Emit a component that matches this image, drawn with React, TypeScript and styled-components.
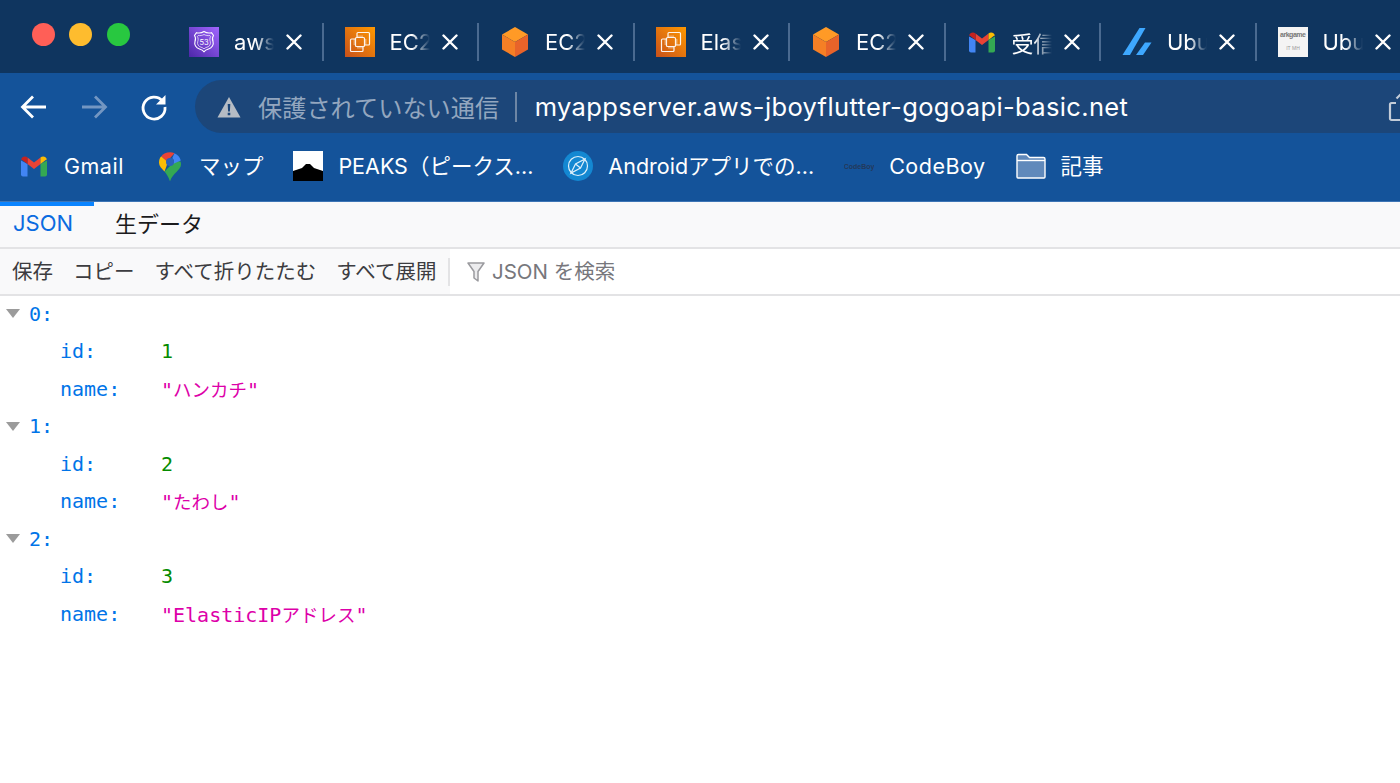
import * as React from "react";
import styled, { createGlobalStyle } from "styled-components";

const SANS = `Inter, "Noto Sans CJK JP", sans-serif`;
const MONO = `"DejaVu Sans Mono", "Noto Sans CJK JP", monospace`;

const GlobalStyle = createGlobalStyle`
    html, body {
        margin: 0;
        background: #ffffff;
        font-family: ${SANS};
        overflow: hidden;
    }
`;

const Page = styled.div`
    width: 1400px;
    height: 783px;
    overflow: hidden;
    display: flex;
    flex-direction: column;
`;

// ---- tab strip ----
const TabStrip = styled.div`
    height: 73px;
    flex: none;
    display: flex;
    align-items: flex-start;
    background: #0f355f;
    overflow: hidden;
`;
const Lights = styled.div`
    flex: none;
    width: 168px;
    box-sizing: border-box;
    display: flex;
    gap: 14.5px;
    padding: 22.5px 0 0 31.5px;
`;
const Light = styled.span<{ $color: string }>`
    width: 23px;
    height: 23px;
    border-radius: 50%;
    background: ${p => p.$color};
`;
const Tab = styled.div`
    flex: none;
    width: 155.5px;
    height: 38px;
    margin-top: 23px;
    box-sizing: border-box;
    padding-left: 21px;
    display: flex;
    align-items: center;
    border-right: 2px solid #4a6a90;
`;
const TabLabel = styled.span`
    width: 40px;
    margin-left: 15px;
    overflow: hidden;
    white-space: nowrap;
    color: #ffffff;
    font-size: 22px;
    -webkit-mask-image: linear-gradient(to right, #000 55%, transparent 100%);
    mask-image: linear-gradient(to right, #000 55%, transparent 100%);
`;
const CloseIcon = styled.svg`
    width: 16px;
    height: 16px;
    margin-left: 12px;
    flex: none;
`;

// ---- navigation bar ----
const NavBar = styled.div`
    height: 67px;
    flex: none;
    display: flex;
    align-items: flex-start;
    box-sizing: border-box;
    padding: 7px 0 0 19px;
    background: #14539a;
    overflow: hidden;
`;
const NavButton = styled.svg`
    flex: none;
    width: 30px;
    height: 30px;
    margin: 12px 30px 0 0;
`;
const Address = styled.div`
    flex: 0 0 1240px;
    height: 53px;
    margin-left: -4px;
    box-sizing: border-box;
    padding: 0 20px 0 22px;
    display: flex;
    align-items: center;
    border-radius: 27px;
    background: #1c4679;
`;
const WarnIcon = styled.svg`
    flex: none;
    width: 24px;
    height: 22px;
`;
const Insecure = styled.span`
    margin-left: 17px;
    color: #93a6bf;
    font-size: 24.2px;
    white-space: nowrap;
`;
const AddressDivider = styled.span`
    width: 1.5px;
    height: 30px;
    margin: 0 18px 0 16px;
    background: #6d86a5;
`;
const Url = styled.span`
    color: #ffffff;
    font-size: 25.5px;
    letter-spacing: 0.36px;
    white-space: nowrap;
`;
const ShareIcon = styled.svg`
    flex: none;
    width: 27px;
    height: 30px;
    margin-left: auto;
`;

// ---- bookmarks ----
const BookmarkBar = styled.div`
    height: 62px;
    flex: none;
    box-sizing: border-box;
    padding: 0 0 9px 19px;
    display: flex;
    align-items: center;
    gap: 30px;
    background: #14539a;
    border-bottom: 1px solid #3d75b5;
`;
const Bookmark = styled.div`
    display: flex;
    align-items: center;
    gap: 15px;
    white-space: nowrap;
`;
const BookmarkLabel = styled.span<{ $latin?: boolean }>`
    color: #ffffff;
    font-size: 21.5px;
    letter-spacing: ${p => (p.$latin ? "0.5px" : "0")};
    margin-bottom: ${p => (p.$latin ? "0" : "3px")};
`;
const BookmarkIcon = styled.svg`
    flex: none;
    width: 30px;
    height: 30px;
`;

// ---- json viewer ----
const ViewerTabs = styled.div`
    height: 45px;
    flex: none;
    display: flex;
    background: #f9f9fa;
    border-bottom: 2px solid #e3e3e5;
`;
const ViewerTab = styled.div<{ $active?: boolean }>`
    box-sizing: border-box;
    padding: ${p => (p.$active ? "0 21px 8px 13px" : "0 0 10px 21px")};
    display: flex;
    align-items: center;
    font-size: 22px;
    color: ${p => (p.$active ? "#0a6be0" : "#1b1b1d")};
    border-top: 4px solid ${p => (p.$active ? "#0a84ff" : "transparent")};
`;
const Toolbar = styled.div`
    height: 45px;
    flex: none;
    display: flex;
    align-items: stretch;
    padding-left: 12px;
    background: #f9f9fa;
    border-bottom: 2px solid #e3e3e5;
`;
const ToolButton = styled.span`
    margin-right: 20px;
    padding-bottom: 3.5px;
    display: flex;
    align-items: center;
    font-size: 20.5px;
    color: #3c3c40;
    &:last-of-type {
        margin-right: 11.5px;
    }
`;
const ToolDivider = styled.div`
    flex: none;
    width: 2px;
    height: 28px;
    align-self: center;
    background: #e3e3e5;
`;
const Search = styled.div`
    flex: 1;
    display: flex;
    align-items: center;
    padding: 0 0 3.5px 17px;
    background: #ffffff;
    color: #77777c;
    font-size: 20.5px;
`;
const FilterIcon = styled.svg`
    width: 18px;
    height: 22px;
    margin-right: 7px;
    margin-top: 4px;
`;

const Tree = styled.div`
    margin-top: -1px;
    font-family: ${MONO};
    font-size: 20px;
`;
const Row = styled.div<{ $nested?: boolean }>`
    height: 37.5px;
    display: flex;
    align-items: center;
    padding-left: ${p => (p.$nested ? "60px" : "6px")};
`;
const Twisty = styled.span`
    width: 0;
    height: 0;
    margin-right: 9px;
    border-left: 7.5px solid transparent;
    border-right: 7.5px solid transparent;
    border-top: 9px solid #9b9b9b;
`;
const Key = styled.span<{ $nested?: boolean }>`
    color: #0074e8;
    width: ${p => (p.$nested ? "101px" : "auto")};
`;
const NumberValue = styled.span`
    color: #058b00;
`;
const StringValue = styled.span`
    color: #dd00a9;
    white-space: nowrap;
`;
const Kana = styled.span`
    font-size: 18.5px;
`;

const Close = () => (
    <CloseIcon viewBox="0 0 16 16">
        <path d="M1.5 1.5l13 13M14.5 1.5l-13 13" stroke="#fff" strokeWidth="2.4" strokeLinecap="round" />
    </CloseIcon>
);

const Route53Icon = () => (
    <BookmarkIcon viewBox="0 0 30 30">
        <defs>
            <linearGradient id="r53" x1="0" y1="1" x2="1" y2="0">
                <stop offset="0" stopColor="#4d27a8" />
                <stop offset="1" stopColor="#a166ff" />
            </linearGradient>
        </defs>
        <rect width="30" height="30" fill="url(#r53)" />
        <path d="M15 4.500c2.200 1.500 5 1.800 7.500 1.200l2 2.800c-1.500 2-1.300 3.800-.5 6 1 3.200-1 6.500-4.500 7.500-1.900.5-3.500 1.300-4.500 2.800-1-1.500-2.600-2.300-4.500-2.800-3.500-1-5.500-4.300-4.500-7.500.8-2.200 1-4-.5-6l2-2.800c2.500.6 5.300.3 7.500-1.200z" fill="none" stroke="#fff" strokeWidth="1.100" />
        <path d="M15 7.500c1.800 1 3.800 1.300 5.800 1l.8 1c-1 1.800-.9 3.500-.3 5.300.7 2.400-.8 4.700-3.300 5.400-1.300.4-2.300.9-3 1.700-.7-.8-1.700-1.300-3-1.700-2.500-.7-4-3-3.300-5.400.6-1.800.7-3.500-.3-5.300l.8-1c2 .3 4 0 5.800-1z" fill="none" stroke="#fff" strokeWidth=".7" />
        <text x="15" y="18" textAnchor="middle" fontSize="7.500" fill="#fff" fontFamily="Inter">53</text>
    </BookmarkIcon>
);

const Ec2Icon = ({ id }: { id: string }) => (
    <BookmarkIcon viewBox="0 0 30 30">
        <defs>
            <linearGradient id={id} x1="0" y1="1" x2="1" y2="0">
                <stop offset="0" stopColor="#c8511b" />
                <stop offset="1" stopColor="#ff9900" />
            </linearGradient>
        </defs>
        <rect width="30" height="30" fill={`url(#${id})`} />
        <g fill="none" stroke="#fff" strokeWidth="1.200" opacity=".92">
            <path d="M10 12H6.500a1 1 0 0 0-1 1v10.500a1 1 0 0 0 1 1H17a1 1 0 0 0 1-1V20" />
            <path d="M12 10V6.500a1 1 0 0 1 1-1h10.500a1 1 0 0 1 1 1V17a1 1 0 0 1-1 1H20" />
            <rect x="10.500" y="10.500" width="9" height="9" rx="1" />
            <path d="M13 8.500v2M15 8.500v2M17 8.500v2M13 19.500v2M15 19.500v2M17 19.500v2M8.500 13h2M8.500 15h2M8.500 17h2M19.500 13h2M19.500 15h2M19.500 17h2" strokeWidth=".8" />
        </g>
    </BookmarkIcon>
);

const CubeIcon = () => (
    <BookmarkIcon viewBox="0 0 30 30">
        <polygon points="15,0 28,7.500 15,15 2,7.500" fill="#ff9a26" />
        <polygon points="2,7.500 15,15 15,30 2,22.500" fill="#f57f25" />
        <polygon points="28,7.500 15,15 15,30 28,22.500" fill="#e8632a" />
    </BookmarkIcon>
);

const GmailIcon = () => (
    <BookmarkIcon viewBox="0 0 30 30">
        <path d="M2 9.500v14A2 2 0 0 0 4 25.500h4.500V13z" fill="#4285f4" />
        <path d="M28 9.500v14a2 2 0 0 1-2 2h-4.500V13z" fill="#34a853" />
        <path d="M8.500 13L15 18l6.500-5V6.500L15 11.500 8.500 6.500z" fill="#ea4335" />
        <path d="M2 9.500C2 6 6 4.500 8.500 6.500V13L2 8z" fill="#c5221f" />
        <path d="M28 9.500C28 6 24 4.500 21.500 6.500V13L28 8z" fill="#fbbc04" />
    </BookmarkIcon>
);

const ZennIcon = () => (
    <BookmarkIcon viewBox="0 0 30 30">
        <polygon points="17.500,1 23.500,1 8,28 0.500,28" fill="#3ea8ff" />
        <polygon points="23,15.500 29.500,15.500 21,28 14,28" fill="#3ea8ff" />
    </BookmarkIcon>
);

const ArkIcon = () => (
    <BookmarkIcon viewBox="0 0 30 30">
        <rect width="30" height="30" fill="#f4f4f4" />
        <text x="15" y="10" textAnchor="middle" fontSize="7" fontWeight="700" fill="#777" fontFamily="Liberation Sans" textLength="26">arkgame</text>
        <text x="15" y="23" textAnchor="middle" fontSize="5" fill="#999" fontFamily="Liberation Sans">IT MH</text>
    </BookmarkIcon>
);

const MapsIcon = () => (
    <BookmarkIcon viewBox="-5 -0.500 30 30">
        <path d="M11 30c-1.300-5-3.700-7.500-5.500-10L16 9.500l5.500 0.500c.4 1 .5 1.500.5 3 0 5.500-8.700 9-11 17z" fill="#34a853" />
        <path d="M5.500 20C2.500 17 0 14.500 0 11c0-2.500.8-4.600 2.300-6.300L9 10.500z" fill="#fbbc04" />
        <path d="M2.300 4.700C4.300 2.300 7.300.800 11 .800c1.700 0 3.200.4 4.500 1L8 10z" fill="#ea4335" />
        <path d="M15.500 1.800c3 1.300 5.400 3.900 6.300 7.200L14 12.500c.6-.7 1-1.500 1-2.500 0-1.400-.7-2.600-1.800-3.300z" fill="#4285f4" />
        <circle cx="11" cy="10.500" r="4" fill="#2a62b8" />
    </BookmarkIcon>
);

const PeaksIcon = () => (
    <BookmarkIcon viewBox="0 0 30 30">
        <rect width="30" height="30" fill="#ffffff" />
        <path d="M0 20l9-3 4-4h4l4 4 9 3v10H0z" fill="#000000" />
    </BookmarkIcon>
);

const CompassIcon = () => (
    <BookmarkIcon viewBox="0 0 30 30">
        <circle cx="15" cy="15" r="15" fill="#1488d2" />
        <circle cx="15" cy="15" r="9.500" fill="none" stroke="#dff0fb" strokeWidth="1.200" />
        <path d="M22 8l-9.500 5L8 22l9.500-5z" fill="none" stroke="#dff0fb" strokeWidth="1.200" />
        <path d="M12.500 13l5 4" stroke="#dff0fb" strokeWidth="1.200" />
    </BookmarkIcon>
);

const CodeBoyIcon = () => (
    <BookmarkIcon viewBox="0 0 30 30">
        <text x="15" y="18" textAnchor="middle" fontSize="7" fontWeight="700" fill="#23395a" fontFamily="Liberation Sans">CodeBoy</text>
    </BookmarkIcon>
);

const FolderIcon = () => (
    <BookmarkIcon viewBox="0 0 30 30">
        <path d="M1 26V5a1.500 1.500 0 0 1 1.500-1.500h8l3 3h14A1.500 1.500 0 0 1 29 8v18a1 1 0 0 1-1 1H2a1 1 0 0 1-1-1z" fill="#6089bb" stroke="#fff" strokeWidth="1.400" />
        <path d="M1 9.500h28" stroke="#fff" strokeWidth="1.400" />
    </BookmarkIcon>
);

const TABS: { icon: React.ReactNode; label: string }[] = [
    { icon: <Route53Icon />, label: "aws" },
    { icon: <Ec2Icon id="ec2a" />, label: "EC2" },
    { icon: <CubeIcon />, label: "EC2" },
    { icon: <Ec2Icon id="ec2b" />, label: "Elastic" },
    { icon: <CubeIcon />, label: "EC2" },
    { icon: <GmailIcon />, label: "受信ト" },
    { icon: <ZennIcon />, label: "Ubuntu" },
    { icon: <ArkIcon />, label: "Ubuntu" },
];

const BOOKMARKS: { icon: React.ReactNode; label: string; latin?: boolean }[] = [
    { icon: <GmailIcon />, label: "Gmail", latin: true },
    { icon: <MapsIcon />, label: "マップ" },
    { icon: <PeaksIcon />, label: "PEAKS（ピークス..." },
    { icon: <CompassIcon />, label: "Androidアプリでの..." },
    { icon: <CodeBoyIcon />, label: "CodeBoy", latin: true },
    { icon: <FolderIcon />, label: "記事" },
];

const ITEMS = [
    { id: 1, name: "ハンカチ" },
    { id: 2, name: "たわし" },
    { id: 3, name: "ElasticIPアドレス" },
];

// kana in the reference is narrower than the mono cell
const renderString = (text: string) =>
    `"${text}"`.split(/([\u3000-\u30ff]+)/).map((part, i) =>
        i % 2 === 1 ? <Kana key={i}>{part}</Kana> : <React.Fragment key={i}>{part}</React.Fragment>
    );

const App = () => {
    return (
        <Page>
            <GlobalStyle />
            <TabStrip>
                <Lights>
                    <Light $color="#ff5f57" />
                    <Light $color="#febc2e" />
                    <Light $color="#28c840" />
                </Lights>
                {TABS.map((tab, i) => (
                    <Tab key={i}>
                        {tab.icon}
                        <TabLabel>{tab.label}</TabLabel>
                        <Close />
                    </Tab>
                ))}
            </TabStrip>
            <NavBar>
                <NavButton viewBox="0 0 30 30">
                    <path d="M27 15H4M14 4.500L3.500 15 14 25.500" fill="none" stroke="#fff" strokeWidth="2.800" />
                </NavButton>
                <NavButton viewBox="0 0 30 30">
                    <path d="M3 15h23M16 4.500L26.500 15 16 25.500" fill="none" stroke="#7396c2" strokeWidth="2.800" />
                </NavButton>
                <NavButton viewBox="0 0 30 30">
                    <path d="M23.500 9A11 11 0 1 0 26 15" fill="none" stroke="#fff" strokeWidth="2.800" />
                    <path d="M26.500 3v9.500H17z" fill="#fff" />
                </NavButton>
                <Address>
                    <WarnIcon viewBox="0 0 24 22">
                        <path d="M12 1L23.500 21.500H.5z" fill="#b6bcc4" />
                        <path d="M10.700 8h2.600l-.4 7.500h-1.800zM10.700 16.800h2.600v2.500h-2.600z" fill="#1c4679" />
                    </WarnIcon>
                    <Insecure>保護されていない通信</Insecure>
                    <AddressDivider />
                    <Url>myappserver.aws-jboyflutter-gogoapi-basic.net</Url>
                    <ShareIcon viewBox="0 0 27 30">
                        <path d="M8 11H3.500A1.500 1.500 0 0 0 2 12.500v14A1.500 1.500 0 0 0 3.500 28h20a1.500 1.500 0 0 0 1.500-1.500v-14a1.500 1.500 0 0 0-1.500-1.500H19M13.500 19V2M8.500 6.500l5-5 5 5" fill="none" stroke="#c3ccd8" strokeWidth="2.200" />
                    </ShareIcon>
                </Address>
            </NavBar>
            <BookmarkBar>
                {BOOKMARKS.map(mark => (
                    <Bookmark key={mark.label}>
                        {mark.icon}
                        <BookmarkLabel $latin={mark.latin}>{mark.label}</BookmarkLabel>
                    </Bookmark>
                ))}
            </BookmarkBar>
            <ViewerTabs>
                <ViewerTab $active>JSON</ViewerTab>
                <ViewerTab>生データ</ViewerTab>
            </ViewerTabs>
            <Toolbar>
                <ToolButton>保存</ToolButton>
                <ToolButton>コピー</ToolButton>
                <ToolButton>すべて折りたたむ</ToolButton>
                <ToolButton>すべて展開</ToolButton>
                <ToolDivider />
                <Search>
                    <FilterIcon viewBox="0 0 18 22">
                        <path d="M1 2h16l-6 8.500V20l-4-3v-6.500z" fill="#ececee" stroke="#9a9a9e" strokeWidth="1.500" strokeLinejoin="round" />
                    </FilterIcon>
                    JSON を検索
                </Search>
            </Toolbar>
            <Tree>
                {ITEMS.map((item, i) => (
                    <React.Fragment key={item.id}>
                        <Row>
                            <Twisty />
                            <Key>{i}:</Key>
                        </Row>
                        <Row $nested>
                            <Key $nested>id:</Key>
                            <NumberValue>{item.id}</NumberValue>
                        </Row>
                        <Row $nested>
                            <Key $nested>name:</Key>
                            <StringValue>{renderString(item.name)}</StringValue>
                        </Row>
                    </React.Fragment>
                ))}
            </Tree>
        </Page>
    );
};

export default App;
